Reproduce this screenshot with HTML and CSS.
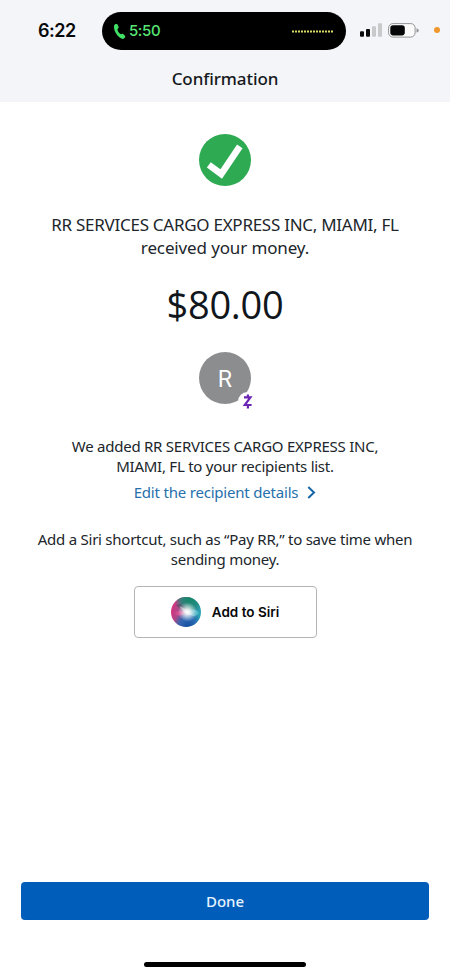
FILE: index.html
```html
<!DOCTYPE html>
<html lang="en">
<head>
<meta charset="utf-8">
<title>Confirmation</title>
<link rel="stylesheet" href="styles.css">
</head>
<body>
<div class="screen">
  <header class="header">
    <div class="status">
      <span class="clock">6:22</span>
      <div class="island">
        <svg class="phone" width="13" height="17" viewBox="0 0 13 17"><path d="M1.2 2.2C1.8 1 3.8.4 4.5 1.4L5.7 4.1C6 5 4.7 5.7 4.5 6.5C4.5 8 6 10.1 7.5 11.1C8.4 11.3 9.5 10.6 10.2 11L12.1 13C12.7 13.9 11.3 15.7 10.1 15.9C6.2 16.2-.4 8 1.2 2.2Z" fill="#3fe063"/></svg>
        <span class="call-time">5:50</span>
        <svg class="wave" width="42" height="3" viewBox="0 0 42 3"><path d="M1 1.5H42" stroke="#d9dc62" stroke-width="2" stroke-dasharray="2 1"/></svg>
      </div>
      <svg class="signal" width="22" height="14" viewBox="0 0 22 14"><g fill="#080a0c"><rect x="0" y="8.3" width="4" height="5.4" rx="1"/><rect x="6" y="6" width="4" height="7.7" rx="1"/></g><g fill="#c7c9cb"><rect x="12" y="3.2" width="4" height="10.5" rx="1"/><rect x="18" y=".2" width="4" height="13.5" rx="1"/></g></svg>
      <svg class="battery" width="31" height="15" viewBox="0 0 31 15"><rect x=".6" y=".6" width="26.5" height="13.5" rx="4.3" fill="#fafafa" stroke="#929496"/><rect x="2.3" y="2.3" width="14.5" height="10.1" rx="2.8" fill="#050607"/><path d="M28.5 5.2C31.5 6 31.5 8.8 28.5 9.6Z" fill="#929496"/></svg>
      <i class="mic"></i>
    </div>
    <h1 class="title">Confirmation</h1>
  </header>
  <main class="content">
    <svg class="check" width="52" height="52" viewBox="0 0 52 52"><circle cx="26" cy="26" r="26" fill="#2eaa53"/><path d="M9.8 30.8L22.2 40L40.8 12.4" fill="none" stroke="#fff" stroke-width="6.6"/></svg>
    <p class="message"><span class="m1">RR SERVICES CARGO EXPRESS INC, MIAMI, FL</span><span class="m2">received your money.</span></p>
    <p class="amount">$80.00</p>
    <div class="avatar">R
      <svg class="zelle" width="19" height="19" viewBox="0 0 19 19"><circle cx="9.5" cy="9.5" r="9.5" fill="#fff"/><path d="M6 5.4H12.4L6.8 13H13.6M9.9 2.4V5.4M9.9 13V16.4" fill="none" stroke="#6b25b5" stroke-width="2.2"/></svg>
    </div>
    <p class="note"><span>We added RR SERVICES CARGO EXPRESS INC,</span><span>MIAMI, FL to your recipients list.</span></p>
    <a class="link"><span>Edit the recipient details</span><svg width="9" height="13" viewBox="0 0 9 13"><path d="M1.3 1.1L7 6.5L1.3 11.9" fill="none" stroke="#1767a8" stroke-width="2"/></svg></a>
    <p class="note siri-note"><span>Add a Siri shortcut, such as “Pay RR,” to save time when</span><span>sending money.</span></p>
    <button class="siri">
      <svg width="30" height="30" viewBox="0 0 30 30">
        <defs>
          <linearGradient id="base" x1="0" y1=".4" x2="1" y2=".6"><stop offset="0" stop-color="#d9317d"/><stop offset=".4" stop-color="#8a5a92"/><stop offset=".7" stop-color="#2f8fa8"/><stop offset="1" stop-color="#2ba5b5"/></linearGradient>
          <radialGradient id="green" cx=".62" cy=".05" r=".5"><stop offset="0" stop-color="#128667"/><stop offset=".6" stop-color="#1f8a76" stop-opacity=".8"/><stop offset="1" stop-color="#1f8a76" stop-opacity="0"/></radialGradient>
          <radialGradient id="blue" cx=".57" cy=".98" r=".5"><stop offset="0" stop-color="#174da0"/><stop offset=".6" stop-color="#2766b5" stop-opacity=".85"/><stop offset="1" stop-color="#2766b5" stop-opacity="0"/></radialGradient>
          <radialGradient id="glow" cx=".55" cy=".5" r=".32"><stop offset="0" stop-color="#fff"/><stop offset=".3" stop-color="#fff" stop-opacity=".8"/><stop offset="1" stop-color="#fff" stop-opacity="0"/></radialGradient>
        </defs>
        <circle cx="15" cy="15" r="15" fill="url(#base)"/><circle cx="15" cy="15" r="15" fill="url(#green)"/><circle cx="15" cy="15" r="15" fill="url(#blue)"/>
        <path d="M5 8Q12 5 17 15Q9 12 5 8Z" fill="#4b4559" opacity=".5"/>
        <path d="M4 17Q6 11 16 15Q9 21 4 17Z" fill="#f04f99" opacity=".55"/><path d="M16 15Q25 10 28 16Q24 23 16 15Z" fill="#69cbd7" opacity=".6"/>
        <circle cx="15" cy="15" r="15" fill="url(#glow)"/><path d="M8 9L17 13L21 18L15 17Z" fill="#fff" opacity=".4"/>
      </svg>
      <span>Add to Siri</span>
    </button>
  </main>
  <footer class="footer">
    <button class="done">Done</button>
    <div class="home"></div>
  </footer>
</div>
</body>
</html>
```

FILE: styles.css
```css
* { box-sizing: border-box; }
body { margin: 0; background: #fff; color: #20262b; font-family: "Noto Sans", sans-serif; }
p, h1 { margin: 0; }
button { font: inherit; padding: 0; }
svg { display: block; flex: none; }
.screen { width: 450px; height: 976px; display: flex; flex-direction: column; overflow: hidden; }
.header { height: 102px; flex: none; background: #f4f5f8; }
.status { height: 62px; padding: 12px 0 0 38px; display: flex; }
.clock { width: 64px; height: 38px; font: 600 18px/38px Inter, sans-serif; letter-spacing: -.5px; color: #080a0c; white-space: nowrap; }
.island { width: 244px; height: 38px; border-radius: 19px; background: #000; display: flex; align-items: center; padding: 0 13px 0 11px; }
.call-time { margin-left: 3px; font: 500 15px/38px Inter, sans-serif; letter-spacing: -.4px; color: #58e575; }
.wave { margin-left: auto; }
.signal { margin: 11px 0 0 14px; }
.battery { margin: 11px 0 0 6px; }
.mic { width: 6px; height: 6px; border-radius: 50%; background: #ef982b; margin: 15px 0 0 15px; }
.title { font-size: 17px; line-height: 24px; font-weight: 500; text-align: center; letter-spacing: -.08px; color: #15191d; padding-top: 5px; }
.content { flex: 1; display: flex; flex-direction: column; align-items: center; padding-top: 32px; }
.message { margin-top: 27px; font-size: 17px; line-height: 23px; text-align: center; }
.message span, .note span { display: block; white-space: nowrap; }
.m1 { letter-spacing: -.27px; }
.m2 { letter-spacing: -.13px; }
.amount { margin-top: 19px; font-family: "Open Sans", sans-serif; font-size: 38px; line-height: 52px; letter-spacing: -.25px; color: #10161b; }
.avatar { position: relative; width: 52px; height: 52px; margin-top: 22px; border-radius: 50%; background: #8c8d8f; color: #fff; font: 400 22.5px/54px Inter, sans-serif; text-align: center; }
.zelle { position: absolute; left: 39px; top: 40px; }
.note { margin-top: 32px; font-size: 15px; line-height: 20px; letter-spacing: -.25px; text-align: center; }
.link { display: flex; align-items: center; gap: 9px; margin-top: 6px; font-size: 15px; line-height: 21px; letter-spacing: -.2px; color: #2670ac; }
.siri-note { margin-top: 26px; }
.siri { display: flex; align-items: center; justify-content: center; gap: 11px; width: 183px; height: 52px; margin-top: 17px; background: #fff; border: 1px solid #b4b5b7; border-radius: 4px; color: #08090a; font: 600 13.5px/20px Inter, sans-serif; }
.footer { flex: none; height: 94px; display: flex; flex-direction: column; align-items: center; }
.done { width: 408px; height: 38px; padding-bottom: 1px; border: 0; border-radius: 4px; background: #005db9; color: #e6f4ff; font-size: 15px; font-weight: 500; }
.home { width: 162px; height: 5px; margin-top: 42px; border-radius: 3px; background: #000; }
```
